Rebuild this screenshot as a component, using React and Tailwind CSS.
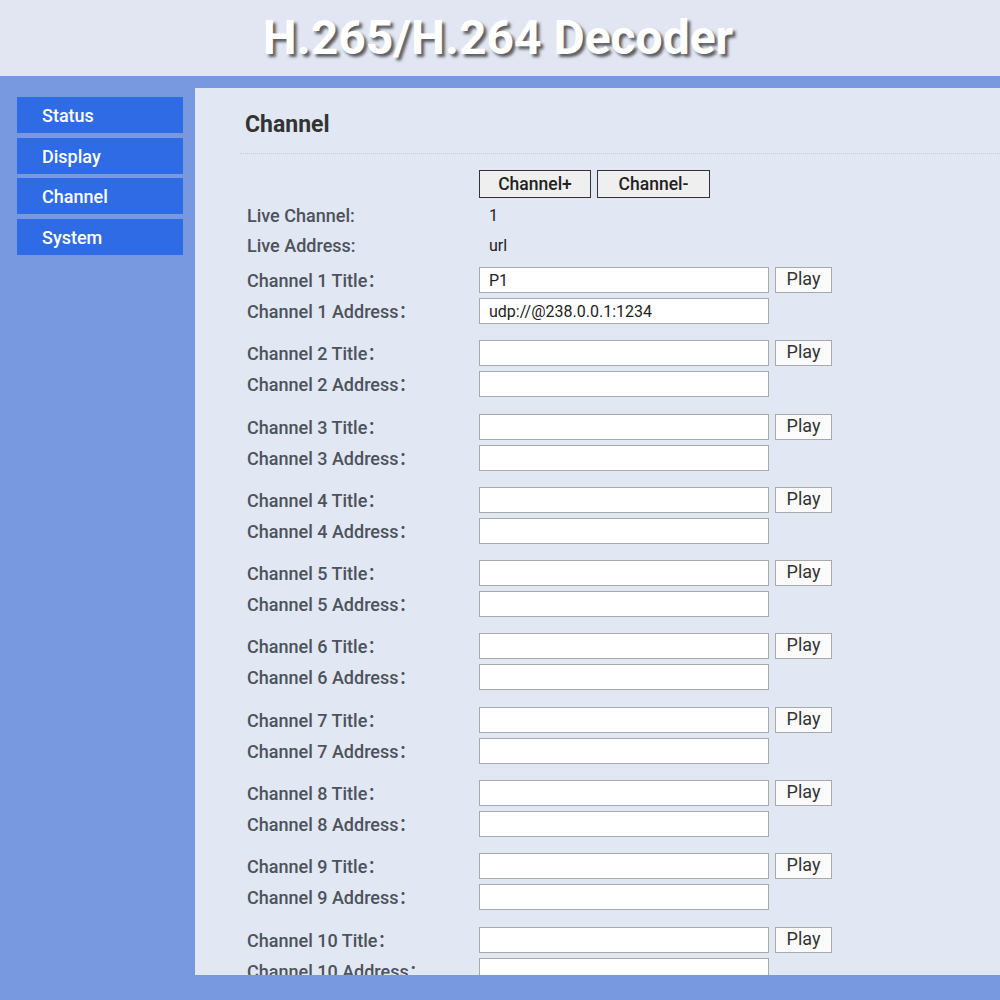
import React from 'react';

const menu = ['Status', 'Display', 'Channel', 'System'];
const channels = [
  { title: 'P1', address: 'udp://@238.0.0.1:1234' },
  ...Array.from({ length: 9 }, () => ({ title: '', address: '' })),
];

function Field({ value }) {
  return (
    <div className="w-[290px] h-[26px] bg-white border border-[#a9a9a9] px-[9px] text-[16px] leading-[25px] text-[#222]">
      {value}
    </div>
  );
}

export default function App() {
  return (
    <div className="w-[1000px] h-[1000px] overflow-hidden bg-[#7899df] font-['Roboto','Noto_Sans_CJK_SC',sans-serif]">
      {/* header */}
      <div className="h-[76px] bg-[#e1e6f2] flex items-center justify-center">
        <h1
          className="text-[48px] font-bold text-white leading-none pb-[1px] mr-[4px]"
          style={{ textShadow: '3px 3px 3px rgba(0,0,0,0.6)' }}
        >
          H.265/H.264 Decoder
        </h1>
      </div>

      <div className="flex pt-[12px]">
        {/* sidebar */}
        <div className="w-[195px] shrink-0 pt-[9px] pl-[17px] flex flex-col gap-[4.5px]">
          {menu.map(m => (
            <div key={m} className="w-[166px] h-[36px] bg-[#2e6be4] text-white text-[18px] font-medium leading-[36px] pt-[1px] pl-[25px]">
              {m}
            </div>
          ))}
        </div>

        {/* content */}
        <div className="flex-1 h-[887px] overflow-hidden bg-[#e1e7f3] pt-[20px] pl-[45px]">
          <h2 className="ml-[5px] h-[32px] leading-[34px] text-[23px] font-bold text-[#333]">Channel</h2>
          <div className="mt-[13px] border-t border-dotted border-[#c8ccd4]" />

          <div className="ml-[7px]">
            <div className="mt-[16px] flex gap-[6px] pl-[232px]">
              <button className="w-[112px] h-[28px] bg-[#efefef] border border-[#333] text-[17.5px] leading-[26px] font-medium text-[#222]">Channel+</button>
              <button className="w-[113px] h-[28px] bg-[#efefef] border border-[#333] text-[17.5px] leading-[26px] font-medium text-[#222]">Channel-</button>
            </div>

            <div className="mt-[2px] flex items-center h-[30px]">
              <div className="w-[232px] text-[18px] leading-[30px] pt-[1px] font-medium text-[#4d525c]">Live Channel:</div>
              <div className="pl-[10px] text-[16px] pt-[1px] text-[#222]">1</div>
            </div>
            <div className="flex items-center h-[30px]">
              <div className="w-[232px] text-[18px] leading-[30px] pt-[1px] font-medium text-[#4d525c]">Live Address:</div>
              <div className="pl-[10px] text-[16px] pt-[1px] text-[#222]">url</div>
            </div>

            <div className="mt-[7px] flex flex-col gap-[16.3px]">
              {channels.map((c, i) => (
                <div key={i} className="flex flex-col gap-[5px]">
                  <div className="flex items-start h-[26px]">
                    <div className="w-[232px] text-[18px] leading-[26px] pt-[1px] font-medium text-[#4d525c]">Channel {i + 1} Title：</div>
                    <Field value={c.title} />
                    <button className="ml-[6px] w-[57px] h-[26px] bg-[#fbfbfb] border border-[#a9a9a9] text-[18px] text-[#333] leading-[20px] pb-[2px]">Play</button>
                  </div>
                  <div className="flex items-start h-[26px]">
                    <div className="w-[232px] text-[18px] leading-[26px] pt-[1px] font-medium text-[#4d525c]">Channel {i + 1} Address：</div>
                    <Field value={c.address} />
                  </div>
                </div>
              ))}
            </div>
          </div>
        </div>
      </div>
    </div>
  );
}
